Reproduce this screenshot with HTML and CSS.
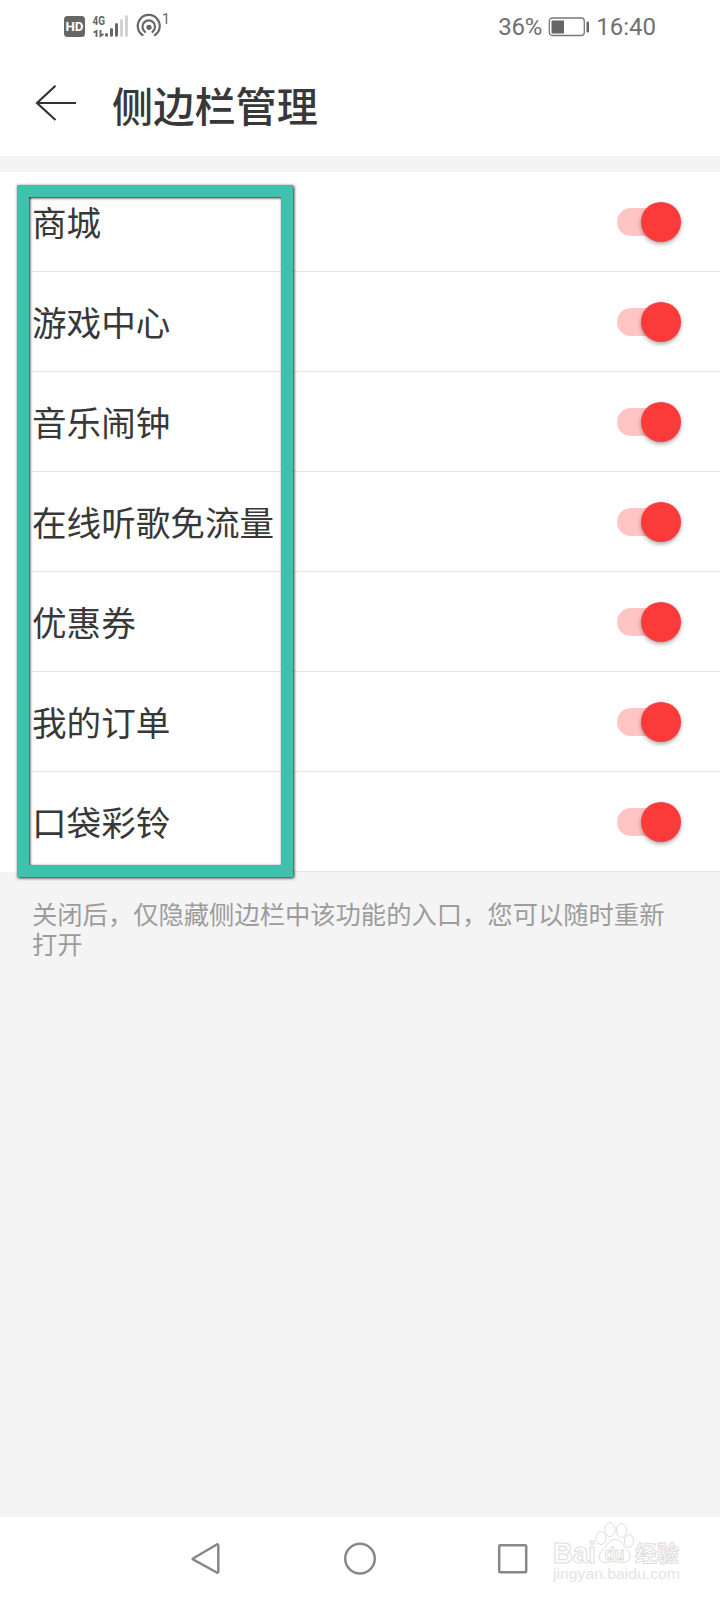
FILE: index.html
```html
<!DOCTYPE html>
<html lang="zh-CN">
<head>
<meta charset="utf-8">
<title>侧边栏管理</title>
<link rel="stylesheet" href="styles.css">
</head>
<body>
<div class="screen">
  <header class="status">
    <svg class="status-icons" width="120" height="50" viewBox="0 0 120 50">
      <rect x="4" y="16" width="21" height="21" rx="3.5" fill="#666"/>
      <text class="hd" x="5.500" y="31.300" textLength="18" lengthAdjust="spacingAndGlyphs">HD</text>
      <text class="net" x="32.500" y="25" textLength="12.500" lengthAdjust="spacingAndGlyphs">4G</text>
      <path d="M33.500 32.500l3-1.500v6M40.500 30v6l3-2" fill="none" stroke="#666" stroke-width="1.900"/>
      <g stroke-width="3" stroke-linecap="round">
        <path d="M46.500 34.500v.8M51.500 29.500v5.800M56.500 24.500v10.800" stroke="#666"/>
        <path d="M61.500 20.500v14.800M66.500 16.500v18.800" stroke="#d2d2d2"/>
      </g>
      <g fill="none" stroke="#666" stroke-width="2.200" stroke-linecap="round">
        <path d="M82.500 35a11 11 0 1 1 12.500 0"/>
        <path d="M85 31.800a6.300 6.300 0 1 1 7.500 0"/>
      </g>
      <circle cx="89" cy="27.300" r="2.600" fill="#666"/>
      <text class="count" x="102" y="24">1</text>
    </svg>
    <div class="status-right">
      <span class="percent">36%</span>
      <svg class="battery" width="42" height="22" viewBox="0 0 42 22">
        <rect x="1.300" y="2" width="35" height="17.500" rx="3" fill="none" stroke="#777" stroke-width="1.300"/>
        <rect x="3.500" y="4.500" width="12.500" height="13" fill="#666"/>
        <rect x="38.500" y="5.500" width="2.500" height="11" rx="1" fill="#666"/>
      </svg>
      <span class="clock">16:40</span>
    </div>
  </header>
  <div class="titlebar">
    <svg class="back" width="44" height="40" viewBox="0 0 44 40">
      <path d="M21.500 2.800L3 20l18.500 17M3 20h39" fill="none" stroke="#333" stroke-width="2.200"/>
    </svg>
    <h1 class="title">侧边栏管理</h1>
  </div>
  <main class="list">
    <div class="row"><span class="label">商城</span><i class="toggle"></i></div>
    <div class="row"><span class="label">游戏中心</span><i class="toggle"></i></div>
    <div class="row"><span class="label">音乐闹钟</span><i class="toggle"></i></div>
    <div class="row"><span class="label">在线听歌免流量</span><i class="toggle"></i></div>
    <div class="row"><span class="label">优惠券</span><i class="toggle"></i></div>
    <div class="row"><span class="label">我的订单</span><i class="toggle"></i></div>
    <div class="row"><span class="label">口袋彩铃</span><i class="toggle"></i></div>
    <div class="highlight"></div>
  </main>
  <p class="note">关闭后，仅隐藏侧边栏中该功能的入口，您可以随时重新打开</p>
  <footer class="nav">
    <svg width="32" height="36" viewBox="0 0 32 36"><path d="M3 17.500L26.800 3.500Q28.300 3 28.300 4.500v26q0 1.500-1.500 1L3 18.300Q2.200 17.900 3 17.500z" fill="none" stroke="#888" stroke-width="2.500" stroke-linejoin="round"/></svg>
    <svg width="36" height="36" viewBox="0 0 36 36"><circle cx="18" cy="17.600" r="14.800" fill="none" stroke="#888" stroke-width="2.500"/></svg>
    <svg width="32" height="36" viewBox="0 0 32 36"><rect x="2.200" y="4.200" width="27" height="27" rx="1" fill="none" stroke="#888" stroke-width="2.500"/></svg>
    <svg class="watermark" width="140" height="70" viewBox="0 0 140 70">
      <g fill="#fff" stroke="#dcdcdc" stroke-width="1">
        <text class="wm-bai" x="3" y="45.500" textLength="43" lengthAdjust="spacingAndGlyphs">Bai</text>
        <ellipse cx="51" cy="21" rx="5" ry="6.500"/>
        <ellipse cx="60" cy="12.500" rx="5" ry="7"/>
        <ellipse cx="71.500" cy="13.500" rx="5" ry="7"/>
        <ellipse cx="79" cy="24" rx="4.500" ry="6.500"/>
        <path d="M65 22.500c7 0 8 6 12 10 5 5 4 13-4 13-4 0-5-1-9-1s-5 1.500-9 1c-8-1-7-9-2-13 5-4 5-10 12-10z"/>
        <text class="wm-du" x="54.500" y="42.500" textLength="20" lengthAdjust="spacingAndGlyphs">du</text>
        <text class="wm-cn" x="85" y="43.500" textLength="44" lengthAdjust="spacingAndGlyphs">经验</text>
      </g>
      <text class="wm-url" x="3" y="62" textLength="127" lengthAdjust="spacingAndGlyphs">jingyan.baidu.com</text>
    </svg>
  </footer>
</div>
</body>
</html>
```

FILE: styles.css
```css
* { box-sizing: border-box; }
body {
  margin: 0;
  background: #f4f4f4;
  font-family: "Noto Sans CJK SC", sans-serif;
}
.screen {
  width: 720px;
  height: 1600px;
  display: flex;
  flex-direction: column;
  overflow: hidden;
}
.status {
  height: 54px;
  padding: 0 64px 0 60px;
  background: #fff;
  display: flex;
  justify-content: space-between;
}
.hd { font: bold 13.5px Roboto, sans-serif; fill: #fff; }
.net { font: bold 13px Roboto, sans-serif; fill: #666; }
.count { font: 14px Roboto, sans-serif; fill: #666; }
.status-right {
  height: 54px;
  display: flex;
  align-items: center;
  font: 24px/54px Roboto, sans-serif;
  color: #707070;
}
.percent { letter-spacing: -0.2px; }
.battery { margin: 0 6px 1px 6px; }
.titlebar {
  height: 102px;
  padding: 0 0 2px 34px;
  background: #fff;
  display: flex;
  align-items: center;
}
.back { margin-bottom: 2px; }
.title {
  margin: 0 0 1px 34px;
  font-size: 41.2px;
  font-weight: 500;
  line-height: 60px;
  color: #383838;
}
.list {
  position: relative;
  margin-top: 16px;
  background: #fff;
  padding-left: 32px;
}
.row {
  height: 100px;
  padding-right: 39px;
  border-bottom: 1px solid #e5e5e5;
  display: flex;
  align-items: center;
  justify-content: space-between;
}
.label {
  font-size: 34.6px;
  line-height: 50px;
  color: #383838;
  padding-bottom: 1px;
}
.toggle {
  width: 64px;
  height: 40px;
  display: flex;
  align-items: center;
}
.toggle::before {
  content: "";
  width: 44px;
  height: 28px;
  flex: none;
  border-radius: 14px;
  background: #ffc4c4;
}
.toggle::after {
  content: "";
  width: 40px;
  height: 40px;
  flex: none;
  margin-left: -20px;
  border-radius: 50%;
  background: #fb3a3a;
  box-shadow: 0 2px 4px rgba(0, 0, 0, 0.35);
}
.highlight {
  position: absolute;
  left: 17px;
  top: 13px;
  width: 276px;
  height: 692px;
  border: 12px solid #3fc1ad;
  box-shadow: 1px 1px 3px rgba(0, 0, 0, 0.9), inset 1px 1px 3px rgba(0, 0, 0, 0.9);
}
.note {
  margin: 27px 50px 0 32px;
  font-size: 25.3px;
  line-height: 29.5px;
  color: #9c9c9c;
}
.nav {
  position: relative;
  height: 83px;
  margin-top: auto;
  padding: 0 191px 0 190px;
  background: #fff;
  display: flex;
  align-items: center;
  justify-content: space-between;
}
.watermark {
  position: absolute;
  left: 550px;
  top: 0;
}
.wm-bai { font: bold 29px/1 "Liberation Sans", sans-serif; }
.wm-du { font: bold 19px/1 "Liberation Sans", sans-serif; }
.wm-cn { font: bold 22px/1 "Noto Sans CJK SC", sans-serif; }
.wm-url { font: 14px/1 "Liberation Sans", sans-serif; fill: #e4e4e4; }
```
